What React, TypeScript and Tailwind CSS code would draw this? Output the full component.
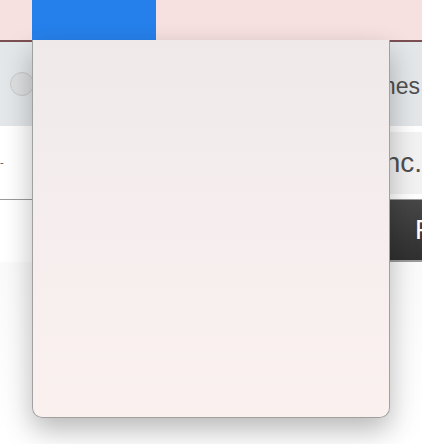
export default function App() {
  return (
    <div className="relative h-[444px] w-[422px] overflow-hidden bg-white font-['Liberation_Sans',Arial,sans-serif]">
      {/* Top bar */}
      <div className="flex h-[42px] border-b-2 border-[#7b4f54] bg-[#f6e0e0]">
        <div className="ml-8 h-10 w-[124px] bg-[#2680eb]" />
      </div>

      {/* Gray toolbar row */}
      <div className="flex h-[84px] items-center justify-between bg-[#e4e7ea] pl-[10px] pr-[2px]">
        <div className="h-6 w-6 rounded-full border border-[#c9c9c9] bg-[#dedfe0]" />
        <span className="pt-1 text-[23px] text-[#4f4f4f]">Themes</span>
      </div>

      {/* Form row */}
      <div className="flex h-[74px] items-center justify-between border-b border-[#9a9a9a] bg-white">
        <span className="text-[11px] text-[#555]">-</span>
        <div className="flex h-[62px] items-center bg-[#f2f2f2] pl-4">
          <span className="text-[28px] text-[#4f4f4f]">Acme Inc.</span>
        </div>
      </div>

      {/* Action row */}
      <div className="flex h-[62px] items-start justify-end bg-white">
        <button className="flex h-[62px] w-[180px] items-center overflow-hidden whitespace-nowrap border-b-2 border-[#9a9a9a] bg-gradient-to-b from-[#474747] to-[#303030] pl-[173px] text-[27px] text-white">
          Finish
        </button>
      </div>
      <div className="h-[182px] bg-gradient-to-b from-[#fafafa] to-white" />

      {/* Popover */}
      <div className="absolute left-8 top-10 h-[378px] w-[358px] rounded-b-[10px] border border-t-0 border-[#a0a0a0] bg-gradient-to-b from-[#efe9ea] via-[#f6eeee] to-[#faf1ef] shadow-[0_12px_28px_rgba(0,0,0,0.28)]" />
    </div>
  );
}
